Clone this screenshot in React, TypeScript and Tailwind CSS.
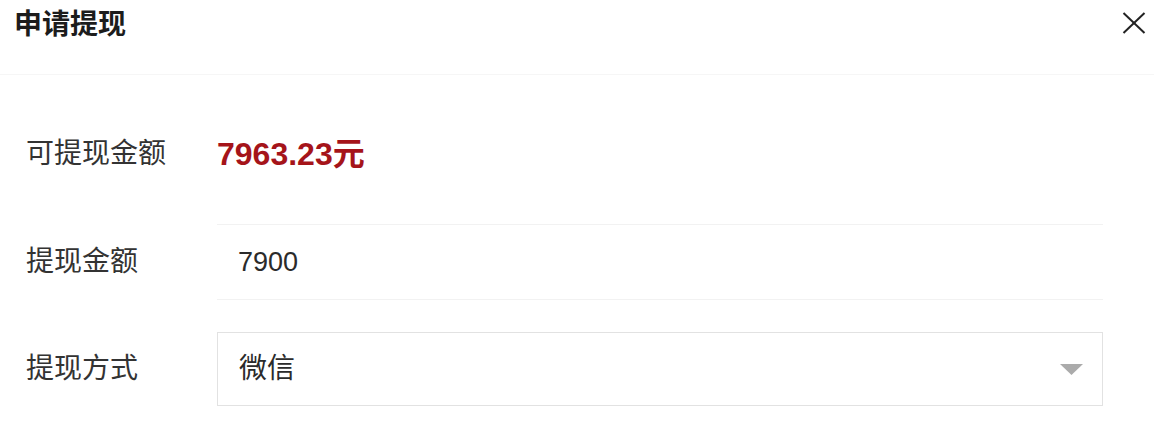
import React from "react";

const font = { fontFamily: '"Liberation Sans", "Noto Sans CJK SC", sans-serif' };

export default function App() {
  return (
    <div
      className="w-[1154px] h-[432px] bg-white overflow-hidden text-[#2b2b2b]"
      style={font}
    >
      <div className="h-[75px] border-b border-[#f6f6f6] flex items-start justify-between pl-[14px] pr-[8px]">
        <div className="mt-[10px] h-[30px] leading-[30px] text-[28px] font-bold text-[#1c1c1c]">
          申请提现
        </div>
        <svg
          className="mt-[12px]"
          width="24"
          height="22"
          viewBox="0 0 24 22"
          fill="none"
          stroke="#222"
          strokeWidth="2"
        >
          <line x1="1.5" y1="1" x2="22.5" y2="21" />
          <line x1="22.5" y1="1" x2="1.5" y2="21" />
        </svg>
      </div>

      <div className="pt-[41px] pl-[26px] pr-[51px] flex flex-col gap-[32px]">
        <div className="h-[76px] flex items-center">
          <div className="w-[191px] text-[28px] leading-[30px] text-[#333]">可提现金额</div>
          <div className="text-[32px] leading-[34px] font-bold text-[#a5141a]">7963.23元</div>
        </div>

        <div className="h-[76px] flex items-center">
          <div className="w-[191px] text-[28px] leading-[30px] text-[#333]">提现金额</div>
          <div className="flex-1 h-full flex items-center pl-[21px] border-t border-b border-[#f2f2f2] text-[27px] text-[#2b2b2b]">
            7900
          </div>
        </div>

        <div className="h-[74px] flex items-center">
          <div className="w-[191px] text-[28px] leading-[30px] text-[#333]">提现方式</div>
          <div className="flex-1 h-full flex items-center justify-between pl-[21px] pr-[19px] border border-[#e2e2e2] text-[28px] text-[#2b2b2b]">
            <span>微信</span>
            <svg width="23" height="11" viewBox="0 0 23 11">
              <polygon points="0,0 23,0 11.5,11" fill="#ababab" />
            </svg>
          </div>
        </div>
      </div>
    </div>
  );
}
